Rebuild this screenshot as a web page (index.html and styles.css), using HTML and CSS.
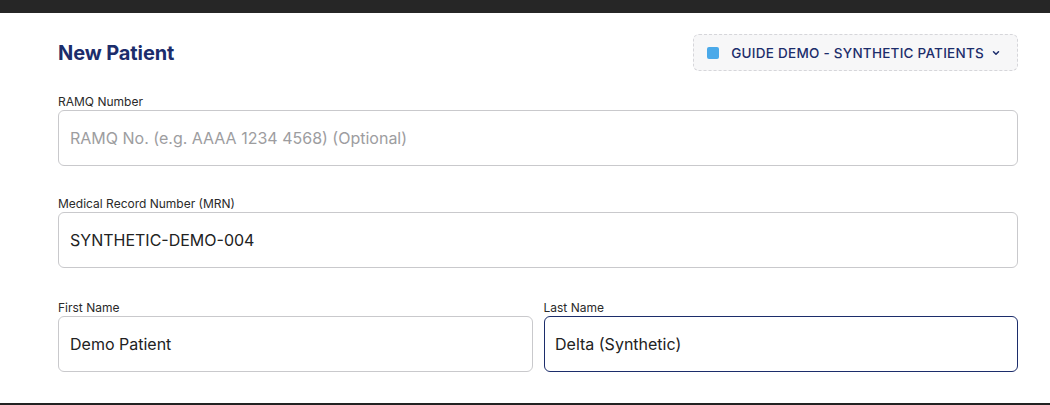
FILE: index.html
```html
<!DOCTYPE html>
<html lang="en">
<head>
<meta charset="utf-8">
<title>New Patient</title>
<link rel="stylesheet" href="styles.css">
</head>
<body>
<div class="topbar"></div>
<main class="page">
  <header class="head">
    <h1 class="title">New Patient</h1>
    <button class="badge" type="button">
      <span class="dot"></span>
      <span class="badge-text">GUIDE DEMO - SYNTHETIC PATIENTS</span>
      <svg class="chev" width="10" height="10" viewBox="0 0 10 10" aria-hidden="true"><polyline points="2.5,3.8 5,6.3 7.5,3.8" fill="none" stroke="#1c2d6b" stroke-width="1.5" stroke-linecap="round" stroke-linejoin="round"/></svg>
    </button>
  </header>

  <div class="field">
    <label class="label">RAMQ Number</label>
    <div class="input placeholder">RAMQ No. (e.g. AAAA 1234 4568) (Optional)</div>
  </div>

  <div class="field">
    <label class="label">Medical Record Number (MRN)</label>
    <div class="input">SYNTHETIC-DEMO-004</div>
  </div>

  <div class="row">
    <div class="field">
      <label class="label">First Name</label>
      <div class="input">Demo Patient</div>
    </div>
    <div class="field">
      <label class="label">Last Name</label>
      <div class="input focus">Delta (Synthetic)</div>
    </div>
  </div>
</main>
<div class="bottombar"></div>
</body>
</html>
```

FILE: styles.css
```css
* { box-sizing: border-box; }
html, body { margin: 0; padding: 0; background: #ffffff; }
body {
  font-family: Inter, "Noto Sans", "Liberation Sans", sans-serif;
  color: #1f1f1f;
  height: 405px;
  overflow: hidden;
  display: flex;
  flex-direction: column;
}
.topbar { height: 13px; background: #262626; flex: none; }
.page {
  padding: 21px 32px 0 58px;
  display: flex;
  flex-direction: column;
  gap: 29px;
  flex: none;
}
.head {
  display: flex;
  justify-content: space-between;
  align-items: center;
  height: 37px;
  margin-bottom: -7px;
}
.title {
  margin: 0;
  font-size: 20px;
  font-weight: 700;
  color: #1c2d6b;
  letter-spacing: -0.1px;
  padding-top: 1px;
}
.badge {
  display: flex;
  align-items: center;
  height: 37px;
  padding: 0 16px 0 13px;
  border: 1px dashed #d6d6da;
  border-radius: 6px;
  background: #f7f7f8;
  font-family: inherit;
  cursor: pointer;
}
.dot {
  width: 12px;
  height: 12px;
  border-radius: 2px;
  background: #4aa9e9;
  margin-right: 12px;
}
.badge-text {
  font-size: 13.5px;
  font-weight: 500;
  color: #1c2d6b;
  letter-spacing: 0.25px;
}
.chev { margin-left: 7px; }
.field { display: flex; flex-direction: column; }
.label {
  font-size: 12px;
  line-height: 17px;
  color: #2a2a2a;
  margin-bottom: 0;
}
.input {
  height: 56px;
  border: 1px solid #c9c9cc;
  border-radius: 6px;
  padding: 0 11px;
  display: flex;
  align-items: center;
  font-size: 16px;
  color: #222;
}
.placeholder { color: #9d9d9f; }
.focus { border: 1.5px solid #1c2d6b; padding-left: 10.5px; }
.row {
  display: grid;
  grid-template-columns: 1fr 1fr;
  gap: 11px;
  margin-top: 2px;
}
.bottombar {
  margin-top: auto;
  height: 2px;
  background: #222;
  flex: none;
}
```
